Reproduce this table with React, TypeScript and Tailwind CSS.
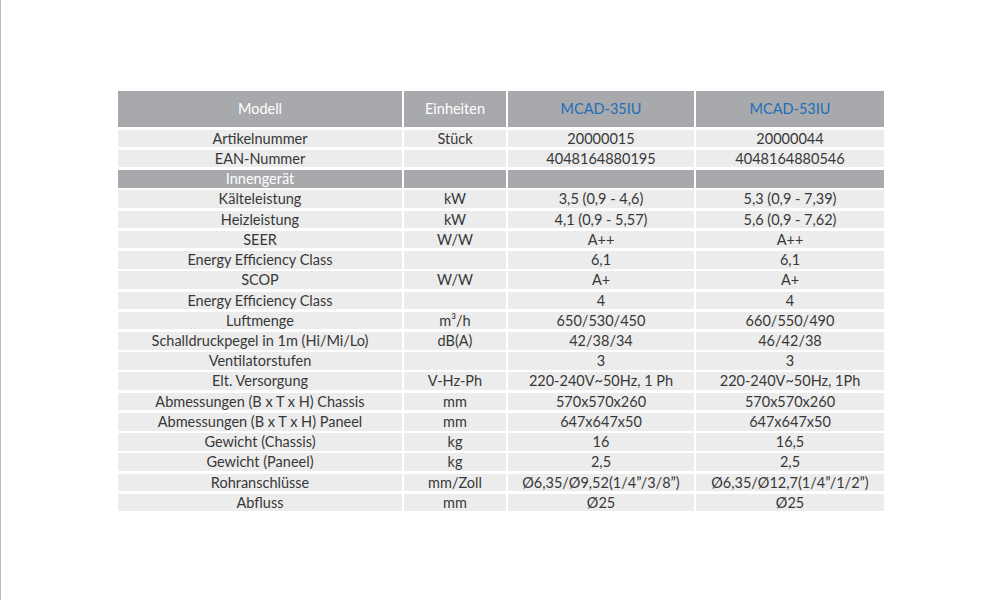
const rows: [string, string, string, string][] = [
  ["Artikelnummer", "Stück", "20000015", "20000044"],
  ["EAN-Nummer", "", "4048164880195", "4048164880546"],
  ["Innengerät", "", "", ""],
  ["Kälteleistung", "kW", "3,5 (0,9 - 4,6)", "5,3 (0,9 - 7,39)"],
  ["Heizleistung", "kW", "4,1 (0,9 - 5,57)", "5,6 (0,9 - 7,62)"],
  ["SEER", "W/W", "A++", "A++"],
  ["Energy Efficiency Class", "", "6,1", "6,1"],
  ["SCOP", "W/W", "A+", "A+"],
  ["Energy Efficiency Class", "", "4", "4"],
  ["Luftmenge", "m³/h", "650/530/450", "660/550/490"],
  ["Schalldruckpegel in 1m (Hi/Mi/Lo)", "dB(A)", "42/38/34", "46/42/38"],
  ["Ventilatorstufen", "", "3", "3"],
  ["Elt. Versorgung", "V-Hz-Ph", "220-240V~50Hz, 1 Ph", "220-240V~50Hz, 1Ph"],
  ["Abmessungen (B x T x H) Chassis", "mm", "570x570x260", "570x570x260"],
  ["Abmessungen (B x T x H) Paneel", "mm", "647x647x50", "647x647x50"],
  ["Gewicht (Chassis)", "kg", "16", "16,5"],
  ["Gewicht (Paneel)", "kg", "2,5", "2,5"],
  ["Rohranschlüsse", "mm/Zoll", "Ø6,35/Ø9,52(1/4”/3/8”)", "Ø6,35/Ø12,7(1/4”/1/2”)"],
  ["Abfluss", "mm", "Ø25", "Ø25"],
];

export default function App() {
  return (
    <div
      className="w-[1000px] h-[600px] bg-white border-l border-[#bdbdbd] pt-[91px] pl-[117px]"
      style={{ fontFamily: "Lato, 'Open Sans', sans-serif" }}
    >
      <div className="grid grid-cols-[284px_102px_186px_188px] gap-x-[2px] gap-y-[2.65px] text-[14.5px] text-[#383838] text-center">
        <div className="h-[36px] leading-[36px] bg-[#a7a9ac] text-white">Modell</div>
        <div className="h-[36px] leading-[36px] bg-[#a7a9ac] text-white">Einheiten</div>
        <div className="h-[36px] leading-[36px] bg-[#a7a9ac] text-[#1f6fb8]">MCAD-35IU</div>
        <div className="h-[36px] leading-[36px] bg-[#a7a9ac] text-[#1f6fb8]">MCAD-53IU</div>
        {rows.map((r, i) => {
          const section = r[0] === "Innengerät";
          return r.map((cell, j) => (
            <div
              key={`${i}-${j}`}
              className={
                section
                  ? "h-[17.6px] leading-[17.6px] bg-[#a7a9ac] text-white whitespace-nowrap"
                  : "h-[17.6px] leading-[17.6px] bg-[#ececec] whitespace-nowrap"
              }
            >
              {cell}
            </div>
          ));
        })}
      </div>
    </div>
  );
}
